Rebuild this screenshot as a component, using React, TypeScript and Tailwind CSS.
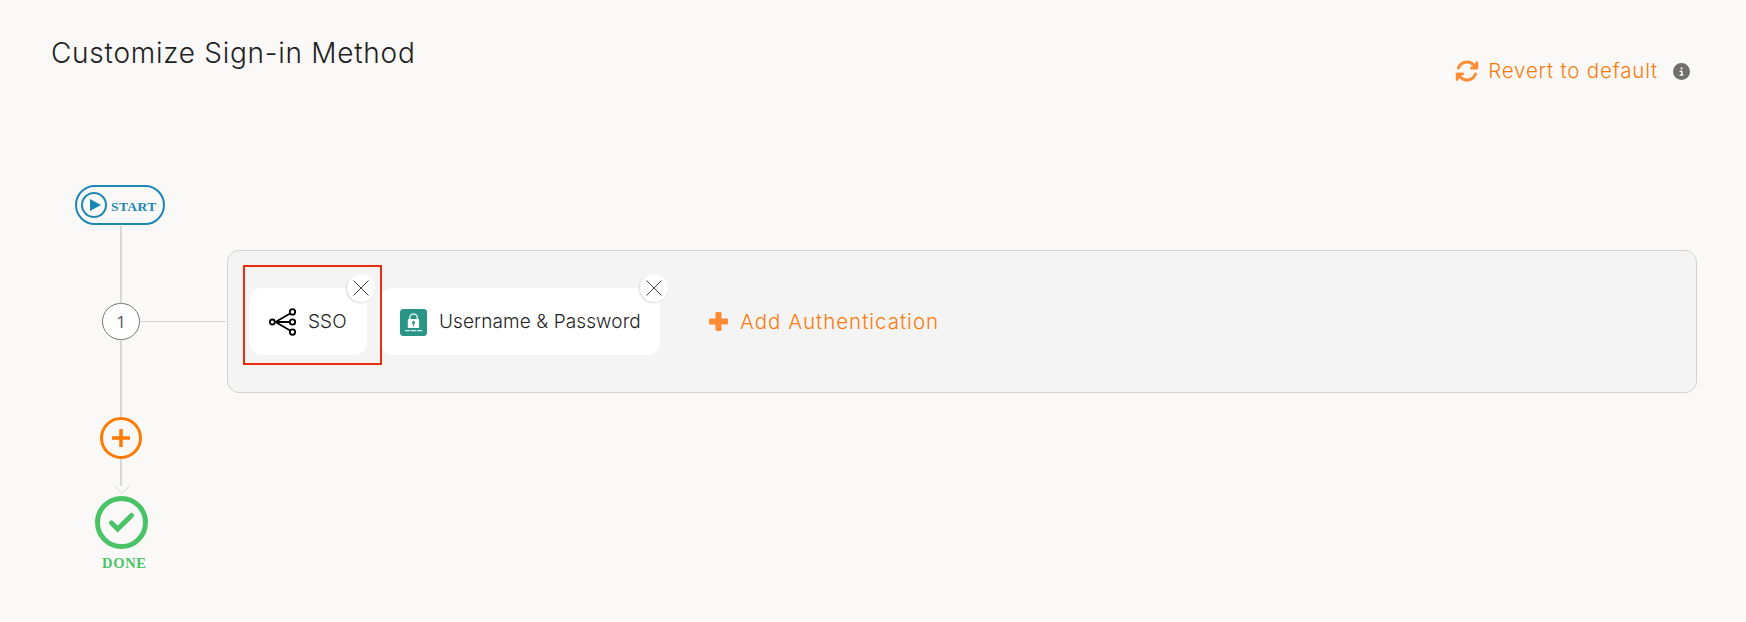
import { FaArrowsRotate, FaCircleInfo } from "react-icons/fa6";
import type { ReactNode } from "react";

function SsoIcon() {
  return (
    <svg className="mt-px" width="28" height="28" viewBox="0 0 28 28" fill="none" stroke="#000" strokeWidth="1.8">
      <path d="M6.500 14 21.500 5.200M6.500 14h14.500M6.500 14l15 8.800" />
      <circle cx="3.300" cy="14" r="2.500" />
      <circle cx="23.500" cy="3.900" r="2.700" fill="#fff" />
      <circle cx="23.500" cy="14" r="2.700" fill="#fff" />
      <circle cx="23.500" cy="24.100" r="2.700" fill="#fff" />
    </svg>
  );
}

function LockIcon() {
  return (
    <svg className="mt-[2px]" width="27" height="27" viewBox="0 0 27 27">
      <rect width="27" height="27" rx="3.500" fill="#2a9487" />
      <path d="M9.700 10.500V8.800a3.800 3.800 0 0 1 7.600 0v1.700" fill="none" stroke="#d5efeb" strokeWidth="1.500" />
      <rect x="7.800" y="10" width="11.300" height="9" rx="1" fill="#fff" />
      <circle cx="13.500" cy="13.400" r="1.500" fill="#2a9487" />
      <path d="M12.900 13h1.200v4h-1.200z" fill="#2a9487" />
      <path d="M5 21.600h17.200" stroke="#d5efeb" strokeWidth="1.200" strokeDasharray="5.200 .8" />
    </svg>
  );
}

function MethodCard({ icon, children }: { icon: ReactNode; children: ReactNode }) {
  return (
    <div className="relative flex h-[67px] shrink-0 items-center rounded-xl bg-white px-[19px] text-[#1f1f1f]">
      {icon}
      {children}
      <button className="absolute -right-2 -top-3.5 flex size-[28px] items-center justify-center rounded-full bg-white shadow-[-1px_1px_2px_rgba(0,0,0,0.15)]">
        <svg width="16" height="16" viewBox="0 0 16 16" stroke="#444" strokeWidth="1">
          <path d="M.5.5l15 15M15.500.5l-15 15" />
        </svg>
      </button>
    </div>
  );
}

function Timeline() {
  return (
    <div className="flex w-[227px] shrink-0 flex-col">
      <div className="ml-[75px] flex h-10 w-[90px] items-center rounded-full border-2 border-[#1c87b3] pl-1">
        <svg width="26" height="26" viewBox="0 0 26 26">
          <circle cx="13" cy="13" r="12" fill="none" stroke="#1c87b3" strokeWidth="2" />
          <path d="M9 7l11 6-11 6z" fill="#1c87b3" />
        </svg>
        <span className="ml-[4px] mt-[3px] font-['Liberation_Serif',serif] text-[13.500px] font-bold leading-4 tracking-[0.4px] text-[#1c87b3]">START</span>
      </div>
      <div className="ml-[120px] mt-px h-[77px] w-[2px] bg-[#d8d8d8]" />
      <div className="ml-[102px] flex h-[37px] items-center">
        <div className="flex h-[37px] w-[38px] items-center justify-center rounded-full border border-[#777] bg-white font-['Open_Sans',sans-serif] text-[17px] font-normal text-[#555]">1</div>
        <div className="h-px w-[86px] bg-[#d2d2d2]" />
      </div>
      <div className="ml-[120px] h-[77px] w-[2px] bg-[#d8d8d8]" />
      <button className="ml-[100px] size-[42px]">
        <svg width="42" height="42" viewBox="0 0 42 42" fill="none" stroke="#ff7a00">
          <circle cx="21" cy="21" r="19.500" strokeWidth="3" />
          <path d="M12 21h18M21 12v18" strokeWidth="3.500" />
        </svg>
      </button>
      <div className="ml-[113px] h-[37px]">
        <svg width="18" height="37" viewBox="0 0 18 37" fill="none" stroke="#d8d8d8">
          <path d="M8 0v27" strokeWidth="2" />
          <path d="M1 26.500l8 8 8-8" strokeWidth="1" />
        </svg>
      </div>
      <svg className="ml-[95px]" width="53" height="53" viewBox="0 0 53 53" fill="none" stroke="#4ac367">
        <circle cx="26.500" cy="26.500" r="24" strokeWidth="5" />
        <path d="M16.500 27l6.200 6L36.500 19.500" strokeWidth="5" strokeLinecap="round" />
      </svg>
      <div className="ml-[102px] mt-1.5 font-['Liberation_Serif',serif] text-[14.500px] font-bold leading-4 tracking-[0.7px] text-[#4ac367]">DONE</div>
    </div>
  );
}

export default function App() {
  return (
    <main className="h-[622px] w-[1746px] overflow-hidden bg-[#fbf9f8] font-[Inter,sans-serif] font-[340]">
      <header className="flex h-[185px] justify-between pl-[51px] pr-[56px]">
        <h1 className="mt-[35px] text-[28px] leading-9 tracking-[0.74px] text-[#1f1f1f]">Customize Sign-in Method</h1>
        <div className="mt-[56px] flex h-[30px] items-center text-[#f97b0b]">
          <FaArrowsRotate className="-mr-px size-6 text-[#ff8c33]" />
          <span className="ml-2.5 text-[20.500px] leading-[30px] tracking-[0.8px]">Revert to default</span>
          <FaCircleInfo className="ml-[15px] size-[17px] text-[#6f6f6f]" />
        </div>
      </header>
      <div className="flex">
        <Timeline />
        <section className="mt-[65px] flex h-[143px] w-[1470px] items-center rounded-xl border border-[#d2d2d2] bg-[#f4f4f4] pl-[15px]">
          <div className="z-10 mb-[13px] flex h-[100px] w-[139px] shrink-0 items-center border-2 border-[#e8300f] pl-[5px] pt-[13px]">
            <MethodCard icon={<SsoIcon />}>
              <span className="ml-[11px] w-[40px] pt-px text-[19px] tracking-[0.1px]">SSO</span>
            </MethodCard>
          </div>
          <div className="-ml-px">
            <MethodCard icon={<LockIcon />}>
              <span className="ml-3 w-[202px] whitespace-nowrap pt-px text-[19px] tracking-[0.1px]">Username &amp; Password</span>
            </MethodCard>
          </div>
          <button className="ml-[49px] flex items-center text-[#f97b0b]">
            <svg width="19" height="19" viewBox="0 0 19 19" fill="#ff8c33">
              <path d="M7.500 0h4a1 1 0 0 1 1 1v5.500H18a1 1 0 0 1 1 1v4a1 1 0 0 1-1 1h-5.500V18a1 1 0 0 1-1 1h-4a1 1 0 0 1-1-1v-5.500H1a1 1 0 0 1-1-1v-4a1 1 0 0 1 1-1h5.500V1a1 1 0 0 1 1-1z" />
            </svg>
            <span className="ml-3 pt-px text-[20.500px] tracking-[1px]">Add Authentication</span>
          </button>
        </section>
      </div>
    </main>
  );
}
